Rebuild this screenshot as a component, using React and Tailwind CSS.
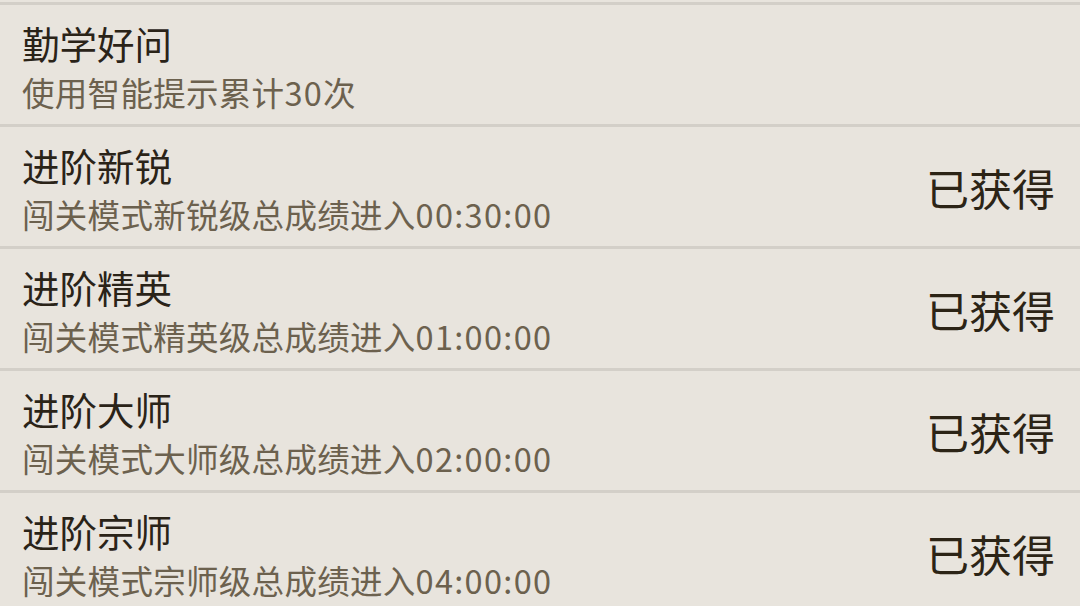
export default function App() {
    const items = [
        { title: "勤学好问", desc: "使用智能提示累计30次", done: false },
        { title: "进阶新锐", desc: "闯关模式新锐级总成绩进入00:30:00", done: true },
        { title: "进阶精英", desc: "闯关模式精英级总成绩进入01:00:00", done: true },
        { title: "进阶大师", desc: "闯关模式大师级总成绩进入02:00:00", done: true },
        { title: "进阶宗师", desc: "闯关模式宗师级总成绩进入04:00:00", done: true },
    ]

    // digits are a touch wider in the original, give them some tracking
    const renderDesc = (text) =>
        text.split(/([0-9:]+)/).map((part, i) =>
            /^[0-9:]+$/.test(part)
                ? <span key={i} className="tracking-[1.3px]">{part}</span>
                : <span key={i}>{part}</span>
        )

    return (
        <div
            className="w-[1080px] h-[606px] overflow-hidden bg-[#e8e4dd] pt-[2px]"
            style={{ fontFamily: '"Noto Sans CJK SC", "Noto Sans", sans-serif' }}
        >
            {items.map((item, idx) => (
                <div key={idx} className="border-t-[3px] border-[#d3cfc8] h-[122px] flex items-center pl-[22px] pr-[25px]">
                    <div className="flex-1 flex flex-col pt-[2px]">
                        <div className="text-[37.5px] leading-[48px] text-[#2a2318]">{item.title}</div>
                        <div className="text-[32.5px] leading-[42px] mt-[4px] tracking-[0.3px] text-[#6c614e]">{renderDesc(item.desc)}</div>
                    </div>
                    {item.done && (
                        <div className="text-[43px] leading-[56px] text-[#2c2416]">已获得</div>
                    )}
                </div>
            ))}
        </div>
    )
}
